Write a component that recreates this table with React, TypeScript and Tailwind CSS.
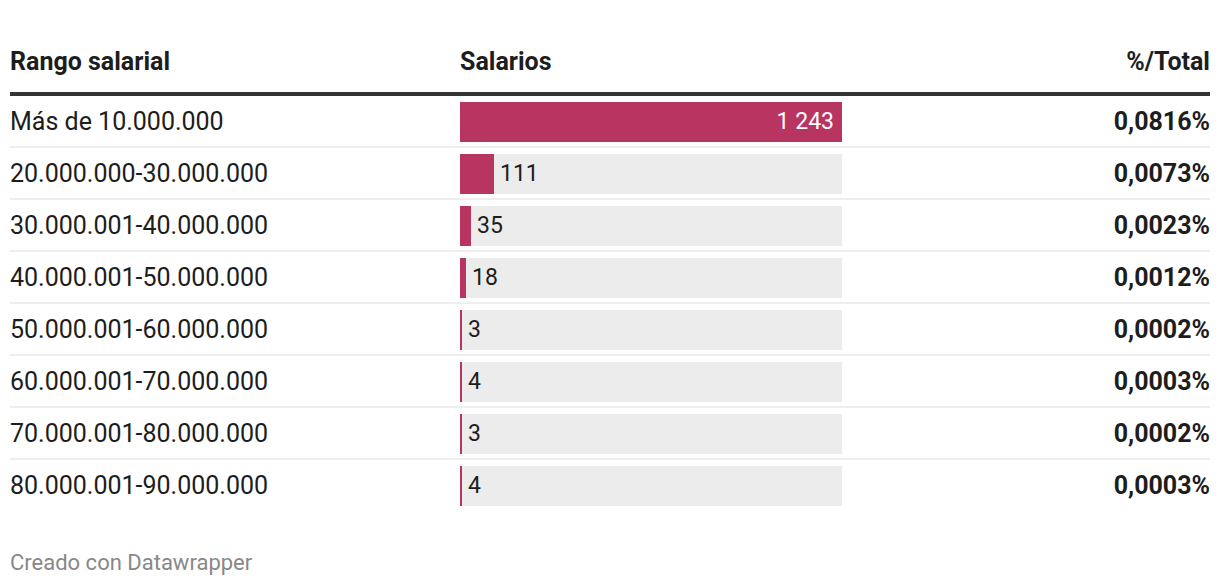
import React from "react";

const rows = [
  { label: "Más de 10.000.000", value: 1243, display: "1 243", pct: "0,0816%" },
  { label: "20.000.000-30.000.000", value: 111, display: "111", pct: "0,0073%" },
  { label: "30.000.001-40.000.000", value: 35, display: "35", pct: "0,0023%" },
  { label: "40.000.001-50.000.000", value: 18, display: "18", pct: "0,0012%" },
  { label: "50.000.001-60.000.000", value: 3, display: "3", pct: "0,0002%" },
  { label: "60.000.001-70.000.000", value: 4, display: "4", pct: "0,0003%" },
  { label: "70.000.001-80.000.000", value: 3, display: "3", pct: "0,0002%" },
  { label: "80.000.001-90.000.000", value: 4, display: "4", pct: "0,0003%" },
];

const MAX = 1243;
const BAR_W = 382;

export default function App() {
  return (
    <div
      className="w-[1220px] h-[586px] bg-white px-[10px] overflow-hidden text-[#1d1d1d]"
      style={{ fontFamily: "Roboto, 'Liberation Sans', sans-serif" }}
    >
      <div className="grid grid-cols-[450px_382px_1fr] pt-[48px] pb-[16px] border-b-4 border-[#333333] text-[25px] leading-[28px] font-bold">
        <div>Rango salarial</div>
        <div>Salarios</div>
        <div className="text-right">%/Total</div>
      </div>
      {rows.map((r, i) => {
        const w = Math.max(2, Math.round((r.value / MAX) * BAR_W));
        const inside = r.value === MAX;
        return (
          <div
            key={i}
            className={
              "grid grid-cols-[450px_382px_1fr] pt-[6px] pb-[4px] " +
              (i < rows.length - 1 ? "border-b-2 border-[#eeeeee]" : "")
            }
          >
            <div className="text-[25px] leading-[40px]">{r.label}</div>
            <div className="h-[40px] bg-[#ececec] flex">
              <div
                className="h-[40px] bg-[#b73560] flex justify-end"
                style={{ width: w }}
              >
                {inside && (
                  <span className="text-white text-[23px] leading-[40px] pr-[8px]">
                    {r.display}
                  </span>
                )}
              </div>
              {!inside && (
                <span className="text-[23px] leading-[40px] ml-[6px]">{r.display}</span>
              )}
            </div>
            <div className="text-right text-[25px] leading-[40px] font-bold">{r.pct}</div>
          </div>
        );
      })}
      <div className="mt-[40px] text-[22px] leading-[26px] text-[#888888]">
        Creado con Datawrapper
      </div>
    </div>
  );
}
